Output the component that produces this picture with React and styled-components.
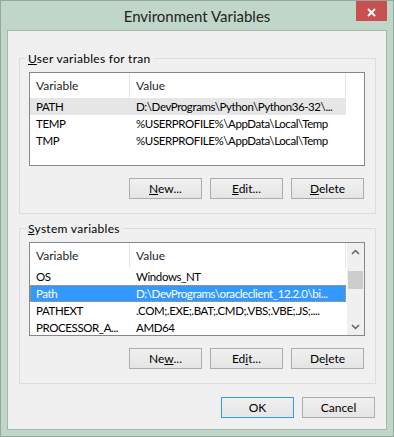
import React from 'react';
import styled, { createGlobalStyle } from 'styled-components';

const GlobalStyle = createGlobalStyle`
  html, body {
    margin: 0;
    padding: 0;
    background: #bfd6c8;
  }
  body {
    font-family: Lato, "Segoe UI", "Noto Sans", sans-serif;
    font-size: 12px;
    color: #000;
  }
`;

const Window = styled.div`
  box-sizing: border-box;
  width: 394px;
  height: 437px;
  display: flex;
  flex-direction: column;
  padding: 0 6px 6px 6px;
  background: #bfd6c8;
  border: 1px solid #93a99b;
`;

const TitleBar = styled.div`
  height: 29px;
  display: grid;
  grid-template-columns: 1fr auto 1fr;
  align-items: center;
`;

const Title = styled.div`
  grid-column: 2;
  font-size: 15px;
  color: #222;
  white-space: nowrap;
`;

const CloseButton = styled.div`
  grid-column: 3;
  justify-self: end;
  align-self: start;
  width: 31px;
  height: 20px;
  background: #c75050;
  display: flex;
  align-items: center;
  justify-content: center;
  padding-top: 2px;
  box-sizing: border-box;
`;

const Client = styled.div`
  flex: 1;
  box-sizing: border-box;
  display: flex;
  flex-direction: column;
  background: #f0f0f0;
  border: 1px solid #a3b8ab;
  padding: 20px 10px 0 11px;
`;

const Group = styled.fieldset`
  margin: 0;
  min-width: 0;
  padding: 6px 10px 14px 9px;
  border: 1px solid #dcdcdc;

  & + & {
    margin-top: 7px;
  }
`;

const Legend = styled.legend`
  padding: 0 3px;
  margin-left: -4px;
  line-height: 15px;
  font-size: 12px;
  letter-spacing: 0.3px;
`;

const ListBox = styled.div`
  box-sizing: border-box;
  height: 94px;
  display: flex;
  justify-content: space-between;
  background: #fff;
  border: 1px solid #828790;
  overflow: hidden;
`;

const Table = styled.div`
  width: 316px;
  display: flex;
  flex-direction: column;
`;

const Row = styled.div`
  display: grid;
  grid-template-columns: 100px 216px;
  height: ${p => (p.$header ? '25px' : '17px')};
  line-height: ${p => (p.$header ? '25px' : '17px')};
  box-sizing: border-box;
  flex-shrink: 0;
  font-size: ${p => (p.$header ? '12px' : '11.5px')};
  letter-spacing: ${p => (p.$header ? '0' : '-0.4px')};
  background: ${p => (p.$state === 'focused' ? '#3399ff' : p.$state === 'selected' ? '#e6e6e6' : '#fff')};
  color: ${p => (p.$state === 'focused' ? '#fff' : '#000')};
  outline: ${p => (p.$state === 'focused' ? '1px dotted #e0913a' : 'none')};
  outline-offset: -1px;
`;

const Cell = styled.div`
  padding: 0 6px;
  white-space: nowrap;
  overflow: hidden;
  border-right: ${p => (p.$header ? '1px solid #e5e5e5' : 'none')};
  color: ${p => (p.$header ? '#1e1e1e' : 'inherit')};
`;

const Scrollbar = styled.div`
  width: 17px;
  display: flex;
  flex-direction: column;
  background: #f0f0f0;
`;

const ArrowButton = styled.div`
  height: 17px;
  flex-shrink: 0;
  display: flex;
  align-items: center;
  justify-content: center;
`;

const Track = styled.div`
  flex: 1;
  padding-top: 11px;
`;

const Thumb = styled.div`
  height: 18px;
  margin: 0 1px;
  background: #cdcdcd;
`;

const ButtonRow = styled.div`
  display: flex;
  justify-content: flex-end;
  gap: 8px;
  padding-right: 1px;
  margin-top: ${p => p.$top || '12px'};
`;

const Button = styled.button`
  box-sizing: border-box;
  width: 73px;
  height: 21px;
  margin: 0;
  padding: 0;
  font: inherit;
  color: #000;
  border: 1px solid ${p => (p.$default ? '#3399ff' : '#acacac')};
  background: linear-gradient(#f0f0f0, #e5e5e5);
`;

const Chevron = ({ up }) => (
  <svg width="9" height="6" viewBox="0 0 9 6">
    <polyline
      points={up ? '1,5 4.5,1.5 8,5' : '1,1 4.5,4.5 8,1'}
      fill="none"
      stroke="#606060"
      strokeWidth="1.5"
    />
  </svg>
);

const userVars = [
  ['PATH', 'D:\\DevPrograms\\Python\\Python36-32\\...', 'selected'],
  ['TEMP', '%USERPROFILE%\\AppData\\Local\\Temp'],
  ['TMP', '%USERPROFILE%\\AppData\\Local\\Temp'],
];

const systemVars = [
  ['OS', 'Windows_NT'],
  ['Path', 'D:\\DevPrograms\\oracleclient_12.2.0\\bi...', 'focused'],
  ['PATHEXT', '.COM;.EXE;.BAT;.CMD;.VBS;.VBE;.JS;....'],
  ['PROCESSOR_A...', 'AMD64'],
];

const VarTable = ({ rows }) => (
  <Table>
    <Row $header>
      <Cell $header>Variable</Cell>
      <Cell $header>Value</Cell>
    </Row>
    {rows.map(([name, value, state]) => (
      <Row key={name} $state={state}>
        <Cell>{name}</Cell>
        <Cell>{value}</Cell>
      </Row>
    ))}
  </Table>
);

const App = () => (
  <>
    <GlobalStyle />
    <Window>
      <TitleBar>
        <Title>Environment Variables</Title>
        <CloseButton>
          <svg width="9" height="9" viewBox="0 0 9 9">
            <path d="M1 1 L8 8 M8 1 L1 8" stroke="#fff" strokeWidth="2" />
          </svg>
        </CloseButton>
      </TitleBar>
      <Client>
        <Group>
          <Legend><u>U</u>ser variables for tran</Legend>
          <ListBox>
            <VarTable rows={userVars} />
          </ListBox>
          <ButtonRow>
            <Button><u>N</u>ew...</Button>
            <Button><u>E</u>dit...</Button>
            <Button><u>D</u>elete</Button>
          </ButtonRow>
        </Group>
        <Group>
          <Legend><u>S</u>ystem variables</Legend>
          <ListBox>
            <VarTable rows={systemVars} />
            <Scrollbar>
              <ArrowButton><Chevron up /></ArrowButton>
              <Track><Thumb /></Track>
              <ArrowButton><Chevron /></ArrowButton>
            </Scrollbar>
          </ListBox>
          <ButtonRow>
            <Button>Ne<u>w</u>...</Button>
            <Button>Ed<u>i</u>t...</Button>
            <Button>De<u>l</u>ete</Button>
          </ButtonRow>
        </Group>
        <ButtonRow $top="13px">
          <Button $default>OK</Button>
          <Button>Cancel</Button>
        </ButtonRow>
      </Client>
    </Window>
  </>
);

export default App;
